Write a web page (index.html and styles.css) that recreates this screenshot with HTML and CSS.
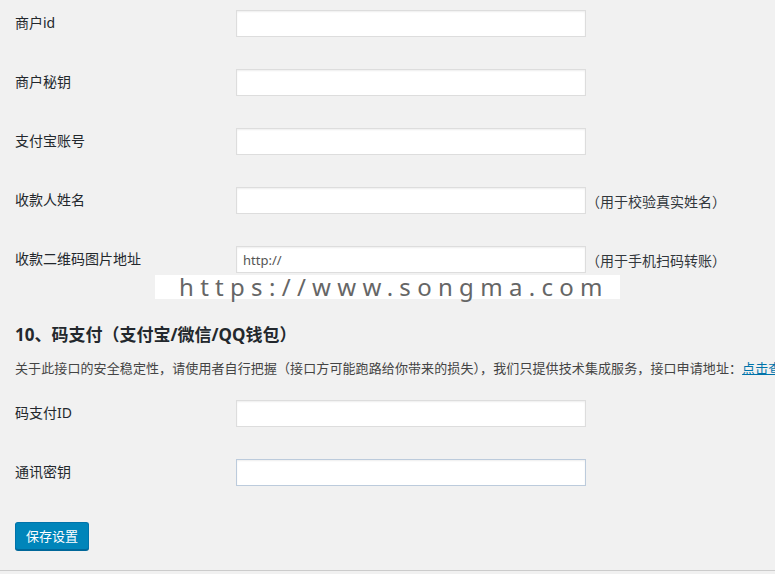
FILE: index.html
```html
<!DOCTYPE html>
<html lang="zh-CN">
<head>
<meta charset="utf-8">
<title>支付设置</title>
<link rel="stylesheet" href="styles.css">
</head>
<body>
<div class="page">
  <div class="form">
    <div class="row"><label class="label">商户id</label><input class="field" type="text"></div>
    <div class="row"><label class="label">商户秘钥</label><input class="field" type="text"></div>
    <div class="row"><label class="label">支付宝账号</label><input class="field" type="text"></div>
    <div class="row"><label class="label">收款人姓名</label><input class="field" type="text"><span class="hint">（用于校验真实姓名）</span></div>
    <div class="row"><label class="label">收款二维码图片地址</label><input class="field" type="text" value="http://"><span class="hint">（用于手机扫码转账）</span></div>
  </div>
  <div class="watermark">https://www.songma.com</div>

  <h2 class="section-title">10、码支付（支付宝/微信/QQ钱包）</h2>
  <p class="desc">关于此接口的安全稳定性，请使用者自行把握（接口方可能跑路给你带来的损失），我们只提供技术集成服务，接口申请地址：<a class="link" href="#">点击查看</a></p>

  <div class="form form-second">
    <div class="row"><label class="label">码支付ID</label><input class="field" type="text"></div>
    <div class="row"><label class="label">通讯密钥</label><input class="field field-focus" type="text"></div>
  </div>

  <div class="actions"><button class="button-primary" type="button">保存设置</button></div>
</div>
<div class="footer-line"></div>
</body>
</html>
```

FILE: styles.css
```css
html, body {
  margin: 0;
  padding: 0;
  background: #f1f1f1;
  overflow: hidden;
}

body {
  width: 775px;
  height: 574px;
  font-family: "Noto Sans", "Noto Sans CJK SC", sans-serif;
  font-size: 13px;
  color: #23282d;
  position: relative;
}

.page {
  padding: 10px 0 0 15px;
  position: relative;
  height: 560px;
  box-sizing: border-box;
}

.form {
  display: flex;
  flex-direction: column;
  gap: 32px;
}

.row {
  display: flex;
  align-items: center;
  height: 27px;
}

.label {
  width: 221px;
  flex: none;
  font-size: 14px;
  line-height: 20px;
  margin-top: -1px;
  color: #23282d;
}

.field {
  width: 350px;
  height: 27px;
  box-sizing: border-box;
  margin: 0;
  padding: 0 6px;
  border: 1px solid #dddddd;
  background: #ffffff;
  box-shadow: inset 0 1px 2px rgba(0, 0, 0, 0.07);
  font-family: "Noto Sans", "Noto Sans CJK SC", sans-serif;
  font-size: 13px;
  color: #555;
  outline: none;
  border-radius: 0;
}

.field-focus {
  border-color: #bccbdc;
}

.hint {
  margin-left: 0;
  font-size: 14px;
  color: #32373c;
  white-space: nowrap;
}

.watermark {
  position: absolute;
  left: 155px;
  top: 275px;
  width: 465px;
  height: 24px;
  background: #ffffff;
  color: #666;
  font-family: "Noto Sans", "Liberation Sans", sans-serif;
  font-size: 24px;
  line-height: 24px;
  letter-spacing: 6.3px;
  padding-left: 24px;
  box-sizing: border-box;
  white-space: nowrap;
}

.section-title {
  margin: 50px 0 0 0;
  font-size: 17px;
  line-height: 24px;
  font-weight: 700;
  color: #23282d;
}

.desc {
  margin: 11px 0 0 0;
  font-size: 13px;
  line-height: 20px;
  letter-spacing: 0.1px;
  color: #444;
  white-space: nowrap;
}

.link {
  color: #0073aa;
  text-decoration: underline;
}

.form-second {
  margin-top: 22px;
}

.actions {
  margin-top: 36px;
}

.button-primary {
  height: 28px;
  padding: 0 10px;
  margin: 0;
  background: #0085ba;
  border: 1px solid #0073aa;
  border-bottom-color: #006799;
  border-radius: 3px;
  box-shadow: 0 1px 0 #006799;
  color: #ffffff;
  font-family: "Noto Sans", "Noto Sans CJK SC", sans-serif;
  font-size: 13px;
  line-height: 26px;
  cursor: pointer;
}

.footer-line {
  position: absolute;
  left: 0;
  right: 0;
  top: 570px;
  height: 1px;
  background: #cccccc;
}
```
